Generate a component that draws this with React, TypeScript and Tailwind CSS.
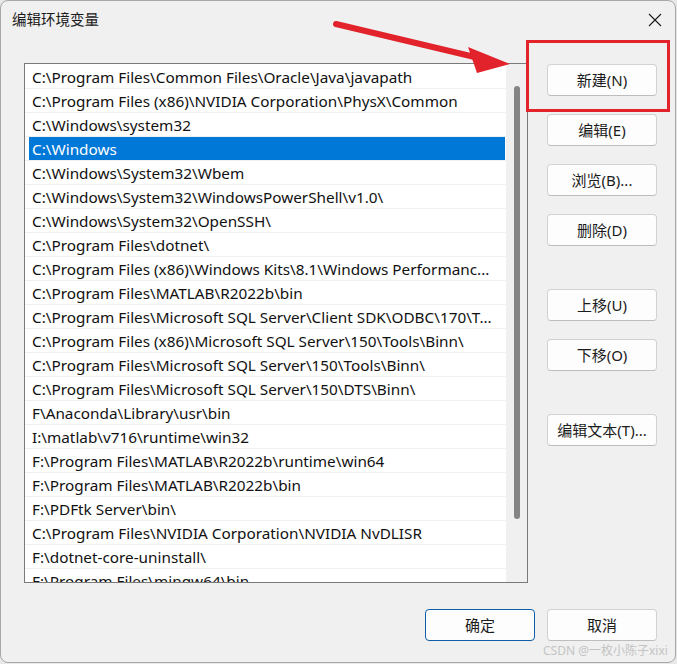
import React from "react";

const rows = [
  "C:\\Program Files\\Common Files\\Oracle\\Java\\javapath",
  "C:\\Program Files (x86)\\NVIDIA Corporation\\PhysX\\Common",
  "C:\\Windows\\system32",
  "C:\\Windows",
  "C:\\Windows\\System32\\Wbem",
  "C:\\Windows\\System32\\WindowsPowerShell\\v1.0\\",
  "C:\\Windows\\System32\\OpenSSH\\",
  "C:\\Program Files\\dotnet\\",
  "C:\\Program Files (x86)\\Windows Kits\\8.1\\Windows Performanc...",
  "C:\\Program Files\\MATLAB\\R2022b\\bin",
  "C:\\Program Files\\Microsoft SQL Server\\Client SDK\\ODBC\\170\\T...",
  "C:\\Program Files (x86)\\Microsoft SQL Server\\150\\Tools\\Binn\\",
  "C:\\Program Files\\Microsoft SQL Server\\150\\Tools\\Binn\\",
  "C:\\Program Files\\Microsoft SQL Server\\150\\DTS\\Binn\\",
  "F\\Anaconda\\Library\\usr\\bin",
  "I:\\matlab\\v716\\runtime\\win32",
  "F:\\Program Files\\MATLAB\\R2022b\\runtime\\win64",
  "F:\\Program Files\\MATLAB\\R2022b\\bin",
  "F:\\PDFtk Server\\bin\\",
  "C:\\Program Files\\NVIDIA Corporation\\NVIDIA NvDLISR",
  "F:\\dotnet-core-uninstall\\",
  "F:\\Program Files\\mingw64\\bin",
];

const font = { fontFamily: '"Noto Sans", "Noto Sans CJK SC", sans-serif' };

function Btn({ label, className = "" }: { label: string; className?: string }) {
  return (
    <div
      className={`h-[32px] w-[110px] flex items-center justify-center rounded-[4px] border border-[#d2d2d2] border-b-[#bdbdbd] bg-[#fdfdfd] text-[15px] text-[#1b1b1b] ${className}`}
    >
      {label}
    </div>
  );
}

export default function App() {
  return (
    <div className="w-[677px] h-[664px] bg-[#e8e8e8]">
      <div
        className="relative w-[676px] h-[663px] bg-[#f0f0f0] border border-[#a8a8a8] rounded-[8px] overflow-hidden flex flex-col"
        style={font}
      >
        {/* title bar */}
        <div className="h-[37px] flex items-center justify-between pl-[11px] pr-[13px]">
          <span className="text-[14.5px] text-[#1a1a1a]">编辑环境变量</span>
          <svg width="14" height="14" viewBox="0 0 14 14" className="mt-[1px]">
            <path d="M1 1 L13 13 M13 1 L1 13" stroke="#1a1a1a" strokeWidth="1.1" />
          </svg>
        </div>

        {/* body */}
        <div className="flex pl-[23px] pt-[25px]">
          {/* list box */}
          <div className="w-[504px] h-[520px] border border-[#7a7a7a] bg-white flex overflow-hidden">
            <div className="flex-1 pt-[1px] overflow-hidden">
              {rows.map((r, i) => (
                <div
                  key={i}
                  className="h-[24px] border-b border-[#f0f0f0] pl-[4px] pr-[1px]"
                >
                  <div
                    className={`h-[23px] pl-[3px] pt-[1px] flex items-center whitespace-nowrap overflow-hidden text-[15.3px] ${
                      i === 3 ? "bg-[#0078d7] text-white" : "text-[#111]"
                    }`}
                  >
                    {r}
                  </div>
                </div>
              ))}
            </div>
            <div className="w-[21px] bg-[#f0f0f0] pt-[22px] pb-[63px] flex justify-center">
              <div className="w-[6px] h-full rounded-[3px] bg-[#858585]" />
            </div>
          </div>

          {/* button column */}
          <div className="ml-[19px] pt-[1px] flex flex-col">
            <Btn label="新建(N)" />
            <Btn label="编辑(E)" className="mt-[18px]" />
            <Btn label="浏览(B)..." className="mt-[18px]" />
            <Btn label="删除(D)" className="mt-[18px]" />
            <Btn label="上移(U)" className="mt-[43px]" />
            <Btn label="下移(O)" className="mt-[18px]" />
            <Btn label="编辑文本(T)..." className="mt-[43px]" />
          </div>
        </div>

        {/* footer */}
        <div className="flex justify-end gap-[12px] pr-[18px] mt-[26px]">
          <div className="h-[32px] w-[110px] flex items-center justify-center rounded-[4px] border border-[#0f5fa8] bg-[#fdfdfd] text-[15px] text-[#1b1b1b]">
            确定
          </div>
          <Btn label="取消" />
        </div>

        {/* red highlight box */}
        <div className="absolute left-[525px] top-[39px] w-[144px] h-[72px] border-[3px] border-[#e3232b]" />

        {/* red arrow */}
        <svg className="absolute left-0 top-0" width="677" height="664" viewBox="0 0 677 664">
          <line x1="335" y1="23" x2="482" y2="58" stroke="#e3232b" strokeWidth="6" strokeLinecap="round" />
          <polygon points="509,63 467,46 476,72" fill="#e3232b" />
        </svg>

        {/* watermark */}
        <div className="absolute left-[542px] top-[641px] text-[12px] text-[#c4c4c4] whitespace-nowrap">
          CSDN @一枚小陈子xixi
        </div>
      </div>
    </div>
  );
}
